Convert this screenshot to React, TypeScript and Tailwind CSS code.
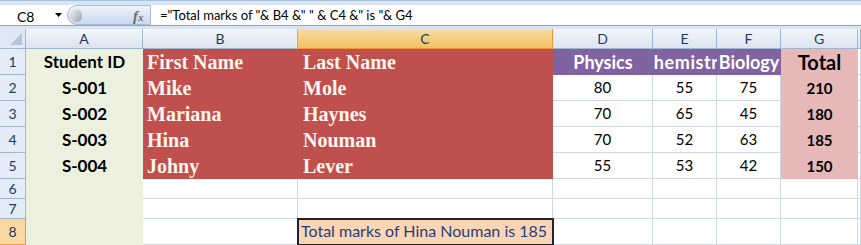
import * as React from "react";

const COLS = ["A", "B", "C", "D", "E", "F", "G", ""];

const STUDENTS = [
  { id: "S-001", first: "Mike", last: "Mole", p: 80, c: 55, b: 75, t: 210 },
  { id: "S-002", first: "Mariana", last: "Haynes", p: 70, c: 65, b: 45, t: 180 },
  { id: "S-003", first: "Hina", last: "Nouman", p: 70, c: 52, b: 63, t: 185 },
  { id: "S-004", first: "Johny", last: "Lever", p: 55, c: 53, b: 42, t: 150 },
];

const calibri = "font-['Lato','Open_Sans',sans-serif]";
const cambria = "font-['Liberation_Serif',serif]";
const grid = "border-r border-b border-[#d0d7e5]";

function FormulaBar() {
  return (
    <div className="h-[29px] bg-[#dae5f3] pt-[4px] border-t border-[#a9c0dd]">
      <div className="flex h-[21px] items-stretch bg-white border-b border-[#8fa6c3]">
        <div className={`relative w-[67px] ${calibri} text-[14px] text-black`}>
          <span className="absolute left-[17px] top-[1px]">C8</span>
          <svg className="absolute left-[55px] top-[8px]" width="7" height="4" viewBox="0 0 7 4">
            <path d="M0 0 H7 L3.5 4 Z" fill="#000" />
          </svg>
        </div>
        <div className="relative w-[84px] rounded-l-full border border-[#a7bcd8] bg-linear-to-b from-[#eef3fa] via-[#dbe6f4] to-[#c8d8ee]">
          <div className="absolute left-[3px] top-[3px] h-[13px] w-[11px] rounded-full bg-linear-to-br from-[#f2f2f2] to-[#9aa3ad]" />
          <span className="absolute left-[65px] top-[-1px] font-['Liberation_Serif',serif] text-[15px] font-bold italic text-[#6b6b6b]">
            f<span className="text-[11px]">x</span>
          </span>
        </div>
        <div className={`flex-1 pl-[9px] ${calibri} text-[13px] leading-[20px] text-black whitespace-nowrap`}>
          ="Total marks of "&amp; B4 &amp;" " &amp; C4 &amp;" is "&amp; G4
        </div>
      </div>
    </div>
  );
}

function ColHeader({ label, selected }: { label: string; selected?: boolean }) {
  return (
    <div
      className={`flex items-center justify-center border-r border-b text-[14px] ${calibri} ${
        selected
          ? "border-[#f29536] bg-linear-to-b from-[#f9dca4] to-[#f1c15f] text-[#1e395b]"
          : "border-[#9eb6ce] bg-linear-to-b from-[#f3f6fb] to-[#dbe4f1] text-[#1e395b]"
      }`}
    >
      {label}
    </div>
  );
}

function RowHeader({ n, selected }: { n: number; selected?: boolean }) {
  return (
    <div
      className={`flex items-center justify-center border-r border-b text-[14px] ${calibri} ${
        selected ? "border-[#f29536] bg-[#f9d99f] text-[#1e395b]" : "border-[#9eb6ce] bg-[#e4ecf7] text-[#1e395b]"
      }`}
    >
      {n}
    </div>
  );
}

export default function App() {
  return (
    <div className="h-[245px] w-[861px] overflow-hidden bg-white">
      <FormulaBar />
      <div className="grid grid-cols-[26px_117px_155px_255px_100px_64px_64px_77px_1fr] grid-rows-[20px_26px_26px_26px_26px_26px_20px_20px_26px]">
        {/* corner */}
        <div className="relative border-r border-b border-[#9eb6ce] bg-[#dfe8f4]">
          <svg className="absolute right-[3px] bottom-[3px]" width="12" height="12" viewBox="0 0 12 12">
            <path d="M12 0 V12 H0 Z" fill="#b4c6de" />
          </svg>
        </div>
        {COLS.map((c, i) => (
          <ColHeader key={i} label={c} selected={c === "C"} />
        ))}

        {/* row 1 */}
        <RowHeader n={1} />
        <div className={`flex items-center justify-center bg-[#ebf1de] ${calibri} text-[17px] font-bold text-black`}>Student ID</div>
        <div className={`flex items-center bg-[#c0504d] pl-[4px] ${cambria} text-[20px] font-bold text-[#fdf6ee]`}>First Name</div>
        <div className={`flex items-center bg-[#c0504d] pl-[5px] ${cambria} text-[20px] font-bold text-[#fdf6ee]`}>Last Name</div>
        <div className={`flex items-center justify-center bg-[#8064a2] ${calibri} text-[18px] font-bold text-white`}>Physics</div>
        <div className={`flex items-center justify-center overflow-hidden whitespace-nowrap bg-[#8064a2] ${calibri} text-[18px] font-bold tracking-[0.6px] text-white`}>
          <span>Chemistry</span>
        </div>
        <div className={`flex items-center justify-center whitespace-nowrap bg-[#8064a2] ${calibri} text-[18px] font-bold text-white`}>Biology</div>
        <div className={`flex items-center justify-center bg-[#e6b9b8] ${calibri} text-[20px] font-bold text-black`}>Total</div>
        <div className={grid} />

        {STUDENTS.map((s, i) => (
          <React.Fragment key={s.id}>
            <RowHeader n={i + 2} />
            <div className={`flex items-center justify-center bg-[#ebf1de] ${calibri} text-[17px] font-bold text-black`}>{s.id}</div>
            <div className={`flex items-center bg-[#c0504d] pl-[4px] ${cambria} text-[20px] font-bold text-[#fdf6ee]`}>{s.first}</div>
            <div className={`flex items-center bg-[#c0504d] pl-[5px] ${cambria} text-[20px] font-bold text-[#fdf6ee]`}>{s.last}</div>
            <div className={`flex items-center justify-center ${grid} ${calibri} text-[15px] text-black`}>{s.p}</div>
            <div className={`flex items-center justify-center ${grid} ${calibri} text-[15px] text-black`}>{s.c}</div>
            <div className={`flex items-center justify-center ${grid} ${calibri} text-[15px] text-black`}>{s.b}</div>
            <div className={`flex items-center justify-center bg-[#e6b9b8] ${calibri} text-[15px] font-bold text-black`}>{s.t}</div>
            <div className={grid} />
          </React.Fragment>
        ))}

        {[6, 7, 8].map((n) => (
          <React.Fragment key={n}>
            <RowHeader n={n} selected={n === 8} />
            <div className="bg-[#ebf1de]" />
            <div className={grid} />
            {n === 8 ? (
              <div className="relative">
                <div className={`absolute inset-x-[-1px] top-[-1px] h-[28px] border-2 border-[#1c2333] bg-[#fcd5b4] px-[2px] ${calibri} text-[16px] leading-[22px] whitespace-nowrap text-[#1f3f7a]`}>
                  Total marks of Hina Nouman is 185
                </div>
              </div>
            ) : (
              <div className={grid} />
            )}
            <div className={grid} />
            <div className={grid} />
            <div className={grid} />
            <div className={grid} />
            <div className={grid} />
          </React.Fragment>
        ))}
      </div>
    </div>
  );
}
